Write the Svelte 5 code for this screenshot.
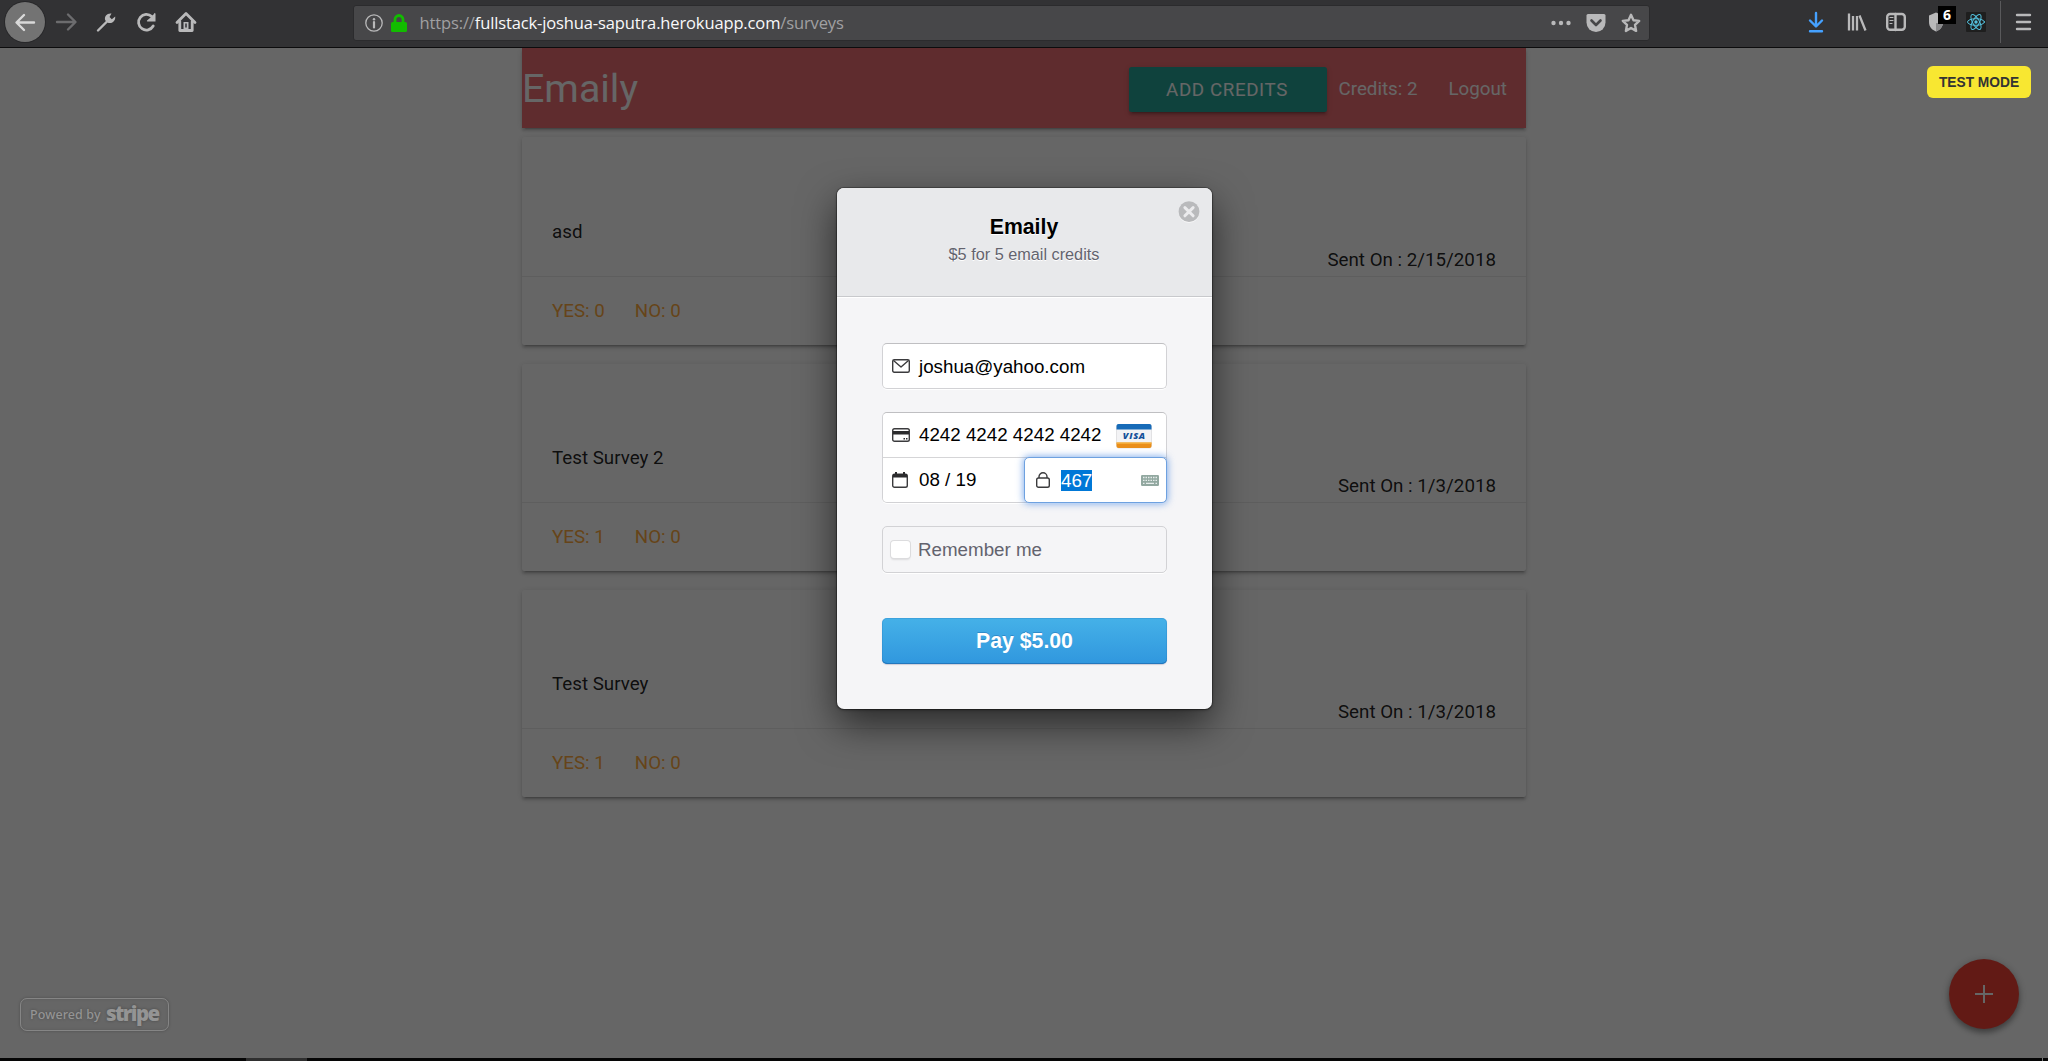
<script>
  const surveys = [
    { title: 'asd', sent: '2/15/2018', yes: 0, no: 0 },
    { title: 'Test Survey 2', sent: '1/3/2018', yes: 1, no: 0 },
    { title: 'Test Survey', sent: '1/3/2018', yes: 1, no: 0 }
  ];
</script>

<div class="window">
  <header class="toolbar">
    <div class="nav-buttons">
      <button class="back" aria-label="Back">
        <svg width="24" height="24" viewBox="0 0 24 24"><path d="M21 12.500H4M11 5l-7.500 7.500L11 20" /></svg>
      </button>
      <svg class="dim" width="24" height="24" viewBox="0 0 24 24"><path d="M2 12H20M13 4.500l7.500 7.500L13 19.500" /></svg>
      <svg class="wrench" width="24" height="24" viewBox="0 0 24 24"><path d="M4 20.500L13 11.500" /><path class="fill" d="M17.500 3.500c-4-.8-7.600 2.700-6.300 6.700l2.600 2.600c4 1.300 7.900-1.600 7.400-6.300l-3.400 2.700-2.300-2.100z" /></svg>
      <svg width="24" height="24" viewBox="0 0 24 24"><path class="thick" d="M19.200 16A7.800 7.800 0 1 1 17.800 6.600L19.500 8.500" /><path class="fill" d="M20.500 3q1 0 1 1v7.500h-8q-1 0-.5-1l3-2.500 3.500-3.500z" /></svg>
      <svg width="24" height="24" viewBox="0 0 24 24"><path class="thick" d="M3 12.500L12 3.500l9 9" /><path class="thick" d="M5.800 11.500v9h12.400v-9" /><path class="fill" d="M9.500 12h5v8h-5z" /><path class="hole" d="M12 14v3" /></svg>
    </div>
    <div class="urlbar">
      <svg class="info" width="18" height="18" viewBox="0 0 18 18"><circle cx="9" cy="9" r="8.200" /><path d="M9 8v5.500" /><circle class="fill" cx="9" cy="5.200" r="1.200" /></svg>
      <svg class="lock" width="16" height="18" viewBox="0 0 16 18"><path d="M4 9V5.500a4 4 0 0 1 8 0V9" /><rect x="0" y="8" width="16" height="10" rx="1.500" /></svg>
      <div class="url"><span class="scheme">https://</span><span class="domain">fullstack-joshua-saputra.herokuapp.com</span><span class="path">/surveys</span></div>
      <div class="url-actions">
        <svg width="20" height="20" viewBox="0 0 20 20"><g class="fill"><circle cx="2.500" cy="10" r="2.200" /><circle cx="10" cy="10" r="2.200" /><circle cx="17.500" cy="10" r="2.200" /></g></svg>
        <svg width="20" height="20" viewBox="0 0 20 20"><path class="fill" d="M2 1h16q1.500 0 1.500 1.500V9.500a9.500 9.500 0 0 1-19 0V2.500Q.500 1 2 1z" /><path class="check" d="M5.500 7.500L10 12l4.500-4.500" /></svg>
        <svg width="20" height="20" viewBox="0 0 20 20"><path d="M10 1.800l2.500 5.400 5.700.7-4.200 4 1.100 6L10 15l-5.100 2.900 1.100-6-4.200-4 5.700-.7z" /></svg>
      </div>
    </div>
    <div class="tools">
      <svg class="download" width="20" height="22" viewBox="0 0 20 22"><path d="M9 2v13M3 9.500l6 6 6-6M3 20.200h12" /></svg>
      <svg class="library" width="20" height="20" viewBox="0 0 20 20"><path d="M2 1.500v17M6 4v14.500M10 4v14.500M12.500 3.500l6 15" /></svg>
      <svg class="sidebar" width="20" height="20" viewBox="0 0 20 20"><rect x="1.200" y="2" width="17.600" height="15.800" rx="3" /><path d="M9.500 2v16" /><path class="thin" d="M4 5.500h3M4 8.500h3M4 11.500h2" /></svg>
      <div class="shield">
        <svg width="20" height="20" viewBox="0 0 20 20"><path class="fill" d="M7 .5l7 3V10c0 5-3 8-7 9.500C3 18 0 15 0 10V3.500z" /><path class="shade" d="M7 11h7c-.5 4.500-3.500 7.300-7 8.500z" /></svg>
        <span class="count">6</span>
      </div>
      <svg class="react" width="20" height="20" viewBox="0 0 20 20"><rect width="20" height="20" rx="1" /><g><ellipse cx="10" cy="10" rx="8.500" ry="3.300" /><ellipse cx="10" cy="10" rx="8.500" ry="3.300" transform="rotate(60 10 10)" /><ellipse cx="10" cy="10" rx="8.500" ry="3.300" transform="rotate(120 10 10)" /></g><circle cx="10" cy="10" r="1.700" /></svg>
      <div class="rule"></div>
      <svg width="16" height="18" viewBox="0 0 16 18"><path d="M2 2h13M2 9h13M2 16h13" /></svg>
    </div>
  </header>

  <main class="viewport">
    <div class="container">
      <nav>
        <span class="brand">Emaily</span>
        <div class="links">
          <button class="add">ADD CREDITS</button>
          <span class="credits">Credits: 2</span>
          <span class="logout">Logout</span>
        </div>
      </nav>
      {#each surveys as s}
        <article class="card">
          <div class="content">
            <p>{s.title}</p>
            <p class="sent">Sent On : {s.sent}</p>
          </div>
          <div class="action"><span>YES: {s.yes}</span><span>NO: {s.no}</span></div>
        </article>
      {/each}
    </div>
    <div class="fab"><svg width="20" height="20" viewBox="0 0 20 20"><path d="M10 1v18M1 10h18" /></svg></div>

    <div class="overlay">
      <span class="test-mode">TEST MODE</span>
      <div class="stripe-badge"><span class="powered">Powered by</span><span class="stripe">stripe</span></div>

      <section class="modal">
        <div class="modal-head">
          <h1>Emaily</h1>
          <p>$5 for 5 email credits</p>
          <svg class="close" width="22" height="22" viewBox="0 0 22 22"><circle class="glow" cx="11" cy="11.700" r="10.300" /><circle class="disc" cx="11" cy="10.700" r="10.400" /><path d="M6.900 6.600l8.200 8.200M15.100 6.600l-8.200 8.200" /></svg>
        </div>
        <div class="modal-body">
          <div class="field email">
            <svg width="18" height="16" viewBox="0 0 18 16"><rect x=".7" y="1.700" width="16.600" height="12.600" rx="1.500" /><path d="M1.500 2.500L9 9l7.500-6.500" /></svg>
            <span>joshua@yahoo.com</span>
          </div>
          <div class="group">
            <div class="field number">
              <svg width="18" height="16" viewBox="0 0 18 16"><rect x=".7" y="1.700" width="16.600" height="12.600" rx="1.800" /><path class="solid" d="M1 4h16v3.600H1zM11.500 11h1.500v1.500h-1.500zM14 11h1.500v1.500H14z" /></svg>
              <span>4242 4242 4242 4242</span>
              <svg class="visa" width="36" height="25" viewBox="0 0 36 25">
                <rect class="white" x=".5" y=".5" width="35" height="23.500" rx="2" />
                <path class="blue" d="M2.500 0h31q2 0 2 2v3.500H.5V2q0-2 2-2z" />
                <path class="orange" d="M.5 18.500h35v3.500q0 2-2 2h-31q-2 0-2-2z" />
                <path class="gold" d="M.5 18.500h35v1.300H.5z" />
                <text x="18.300" y="14.900" text-anchor="middle">VISA</text>
              </svg>
            </div>
            <div class="row">
              <div class="field expiry">
                <svg width="16" height="16" viewBox="0 0 16 16"><rect x=".7" y="2.200" width="14.600" height="13" rx="1.800" /><path class="solid" d="M1 2h14v3.500H1zM3 0h2v3H3zM11 0h2v3h-2z" /></svg>
                <span>08 / 19</span>
              </div>
              <div class="field cvc">
                <svg width="14" height="16" viewBox="0 0 14 16"><rect x=".7" y="6" width="12.600" height="9.200" rx="1.800" /><path d="M3 6V4.800a4 4 0 0 1 8 0V6" /></svg>
                <span class="selected">467</span>
                <svg class="keyboard" width="18" height="11" viewBox="0 0 18 11"><rect width="18" height="11" rx="1.200" /><path d="M2 2.500h14M2 5.300h14" /><path class="space" d="M2 8.300h1.500M5 8.300h8M14.500 8.300H16" /></svg>
              </div>
            </div>
          </div>
          <div class="remember"><span class="box"></span><span>Remember me</span></div>
          <button class="pay">Pay $5.00</button>
        </div>
      </section>
    </div>
  </main>
  <footer><span class="task"></span><span class="edge"></span></footer>
</div>

<style>
  :global(body) { margin: 0; overflow: hidden; background: #666; }
  .window, .window * { box-sizing: border-box; }
  .window { width: 2048px; height: 1061px; display: flex; flex-direction: column; font-family: Roboto, sans-serif; }
  svg { display: block; flex: none; overflow: visible; }
  button { border: 0; padding: 0; margin: 0; font: inherit; }

  .toolbar { height: 48px; flex: none; display: flex; align-items: flex-start; background: #323234; border-bottom: 1px solid #0c0c0d; }
  .toolbar svg { fill: none; stroke: #b9b9ba; stroke-width: 2.4; stroke-linecap: round; stroke-linejoin: round; }
  .toolbar .fill { fill: #b9b9ba; stroke: none; }
  .toolbar .thick { stroke-width: 2.8; }
  .toolbar .hole { stroke: #323234; stroke-width: 1.5; }
  .toolbar .dim { stroke: #6c6c6e; }
  .nav-buttons { width: 353px; display: flex; align-items: center; height: 44px; padding-left: 5px; gap: 16px; }
  .nav-buttons .back { width: 40px; height: 40px; border-radius: 50%; background: #737373; display: grid; place-items: center; box-shadow: 0 0 0 1px #28282a; margin-right: -6px; }
  .nav-buttons .wrench { margin-left: -1px; }
  .back svg { stroke: #d9d9d9; }
  .urlbar { width: 1297px; height: 36px; margin-top: 5px; background: #474749; border: 1px solid #2b2b2d; border-radius: 3px; display: flex; align-items: center; padding: 0 8px 0 11px; }
  .urlbar .info { stroke-width: 1.3; }
  .urlbar .info path { stroke-width: 2.2; }
  .urlbar .lock { margin-left: 8px; stroke: #12bc00; stroke-width: 2.8; }
  .urlbar .lock rect { fill: #12bc00; stroke: none; }
  .url { margin-left: 12.500px; flex: 1; font: 16.500px/34px "Open Sans", "Noto Sans", sans-serif; letter-spacing: -0.13px; color: #a0a0a2; white-space: nowrap; }
  .domain { color: #f9f9fa; }
  .url-actions { display: flex; gap: 15px; }
  .url-actions .check { stroke: #474749; stroke-width: 2.600; }
  .tools { flex: 1; display: flex; align-items: center; height: 44px; padding-left: 157px; }
  .tools .download { stroke: #45a1ff; }
  .tools .library { margin-left: 20px; stroke-linecap: butt; stroke-width: 2.300; }
  .tools .sidebar { margin-left: 19px; }
  .sidebar .thin { stroke-width: 1.2; }
  .shield { margin-left: 23px; width: 20px; position: relative; }
  .shield .shade { fill: #8b8b8d; stroke: none; }
  .count { position: absolute; left: 9px; top: -6px; width: 18px; height: 18px; background: #000; color: #fff; font: bold 14px/17px "Open Sans", sans-serif; text-align: center; }
  .tools .react { margin-left: 17px; stroke: #53c1de; stroke-width: 1; }
  .react rect { fill: #1e1e1e; stroke: none; }
  .react circle { fill: #53c1de; stroke: none; }
  .rule { width: 1px; height: 42px; background: #59595b; margin: 0 14px; }

  .viewport { flex: 1; position: relative; background: #fff; overflow: hidden; }
  .container { width: 1004px; margin: 0 auto; font-size: 18.750px; line-height: 28.125px; color: rgba(0, 0, 0, .87); }
  nav { height: 80px; background: #ee6e73; color: #fff; display: flex; justify-content: space-between; align-items: center; box-shadow: 0 2.500px 2.500px 0 rgba(0,0,0,.14), 0 1.250px 6.250px 0 rgba(0,0,0,.12), 0 3.750px 1.250px -2.500px rgba(0,0,0,.2); }
  .brand { font-size: 39.375px; line-height: 80px; padding-top: 2px; }
  .links { display: flex; align-items: center; padding-right: 19px; }
  .add { width: 198px; height: 45px; margin-top: 3px; border-radius: 2.500px; background: #26a69a; color: #fff; font-size: 18.750px; padding: 1px 1px 0 0; letter-spacing: .6px; box-shadow: 0 2.500px 2.500px 0 rgba(0,0,0,.14), 0 1.250px 6.250px 0 rgba(0,0,0,.12), 0 3.750px 1.250px -2.500px rgba(0,0,0,.2); }
  .credits { margin: 0 31px 0 12px; }
  .credits, .logout { padding-top: 2px; }
  .card { height: 207.500px; margin: 9.375px 0 18.750px; display: flex; flex-direction: column; border-radius: 2.500px; background: #fff; box-shadow: 0 2.500px 2.500px 0 rgba(0,0,0,.14), 0 1.250px 6.250px 0 rgba(0,0,0,.12), 0 3.750px 1.250px -2.500px rgba(0,0,0,.2); }
  .content { flex: 1; padding: 0 30px 2px; display: flex; flex-direction: column; justify-content: flex-end; }
  p { margin: 0; }
  .sent { text-align: right; }
  .action { border-top: 1px solid rgba(160,160,160,.2); padding: 20px 30px; display: flex; gap: 30px; color: #ffab40; }
  .fab { position: absolute; right: 29px; bottom: 29px; width: 70px; height: 70px; border-radius: 50%; background: #f44336; display: grid; place-items: center; box-shadow: 0 4px 5px rgba(0,0,0,.2), 0 2px 8px rgba(0,0,0,.3); }
  .fab svg { stroke: #fff; stroke-width: 2; }

  .overlay { position: absolute; inset: 0; background: rgba(0,0,0,.6); font-family: "Liberation Sans", Arial, sans-serif; display: flex; justify-content: center; align-items: flex-start; padding: 140px 0 0 1px; }
  .test-mode { position: absolute; top: 18px; right: 17px; width: 104px; height: 32px; border-radius: 6px; background: #f8e731; color: #333; font: bold 13.750px/33px "Liberation Sans", Arial, sans-serif; text-align: center; }
  .stripe-badge { position: absolute; left: 20px; bottom: 27px; width: 149px; height: 33px; border: 1px solid #858585; border-radius: 7px; display: flex; align-items: center; padding-left: 9px; color: #949494; box-shadow: 0 0 3px rgba(0,0,0,.25), inset 0 0 3px rgba(0,0,0,.12); text-shadow: 0 0 3px rgba(0,0,0,.3); }
  .powered { width: 76px; font: 500 12.500px "Noto Sans", sans-serif; letter-spacing: .1px; white-space: nowrap; }
  .stripe { font: 800 20.500px/28px "Open Sans", sans-serif; letter-spacing: -1.600px; margin-top: -4px; }
  .modal { width: 375px; height: 521px; border-radius: 7px; background: #f5f5f7; box-shadow: 0 15px 38px rgba(0,0,0,.6), 0 0 0 1px rgba(0,0,0,.25), 0 1px 3px rgba(0,0,0,.4); }
  .modal-head { height: 109px; border-radius: 7px 7px 0 0; background: #e8e9eb; border-bottom: 1px solid #c8c9cc; text-align: center; padding: 25px 1px 0 0; position: relative; }
  h1 { margin: 0; font-size: 21.250px; line-height: 28px; font-weight: bold; color: #000; text-shadow: 0 1px 0 #fff; }
  .modal-head p { font-size: 16.250px; line-height: 26px; color: #63636e; text-shadow: 0 1px 0 #fff; }
  .close { position: absolute; right: 12.500px; top: 13px; }
  .close .glow { fill: #f6f6f7; }
  .close .disc { fill: #b9babc; }
  .close path { stroke: #ebebed; stroke-width: 3; stroke-linecap: round; }
  .modal-body { border-top: 1px solid #fff; padding: 45px 45px 0; display: flex; flex-direction: column; font-size: 18.750px; color: #000; }
  .field { display: flex; align-items: center; background: #fff; height: 46px; padding-left: 9px; position: relative; white-space: nowrap; }
  .field > svg { fill: none; stroke: #3b3b3d; stroke-width: 1.400; stroke-linejoin: round; }
  .field .solid { fill: #2b2b2d; stroke: none; }
  .email, .group { border: 1px solid #d2d2d5; border-top-color: #bfbfc2; border-radius: 5px; box-shadow: 0 1px 0 #fff; }
  .email span { margin-left: 9px; padding-top: 1px; }
  .group { height: 91px; margin-top: 23px; background: #fff; }
  .number { height: 45px; border-bottom: 1px solid #d5d5d7; border-radius: 5px 5px 0 0; }
  .number span { margin-left: 9px; }
  .field .visa { position: absolute; right: 14px; top: 11px; stroke: none; }
  .visa .white { fill: #f3f3f5; stroke: #d8d8da; stroke-width: .7; }
  .visa .blue { fill: #176bb8; }
  .visa .orange { fill: #ea8e19; }
  .visa .gold { fill: #f6b544; }
  .visa text { fill: #14509a; font: italic 800 9.200px "Open Sans", sans-serif; letter-spacing: .7px; }
  .row { display: flex; height: 44px; }
  .expiry { width: 141px; height: 44px; border-radius: 0 0 0 5px; }
  .expiry span { margin-left: 11px; }
  .cvc { width: 143px; height: 46px; margin: -1px -1px 0 0; border: 1px solid #6ea1e0; border-radius: 5px; box-shadow: 0 0 7px 1px rgba(74,137,226,.65); padding-left: 11px; }
  .selected { background: #0078d7; color: #fff; line-height: 21px; margin-left: 11px; }
  .field .keyboard { position: absolute; right: 7px; top: 17px; stroke: none; }
  .keyboard rect { fill: #92a8a0; }
  .keyboard path { stroke: #e6eceb; stroke-width: 1.300; stroke-dasharray: 1.500 1; }
  .keyboard .space { stroke-dasharray: none; }
  .remember { height: 47px; margin-top: 23px; border: 1px solid #d2d2d5; border-radius: 5px; display: flex; align-items: center; padding-left: 8px; color: #63636e; box-shadow: 0 1px 0 #fff; }
  .box { width: 19px; height: 17px; border-radius: 3px; background: #fff; box-shadow: 0 0 0 1px #dcdcde, 0 2px 2px rgba(0,0,0,.1); margin: 0 8px 1px 0; }
  .pay { height: 46px; margin-top: 45px; border-radius: 5px; background: linear-gradient(#45b1e8, #3097de); box-shadow: inset 0 -1px 0 #2277bd, inset 0 0 0 1px rgba(34,119,189,.25), 0 1px 1px rgba(50,50,93,.2); color: #fff; font-weight: bold; font-size: 21.250px; text-shadow: 0 -1px 0 rgba(0,50,120,.25); }
  footer { height: 3px; flex: none; background: #060606; display: flex; justify-content: space-between; padding: 0 5px 0 246px; }
  .task { width: 61px; background: #2f2f2f; }
  .edge { width: 1px; background: #777; }
</style>
